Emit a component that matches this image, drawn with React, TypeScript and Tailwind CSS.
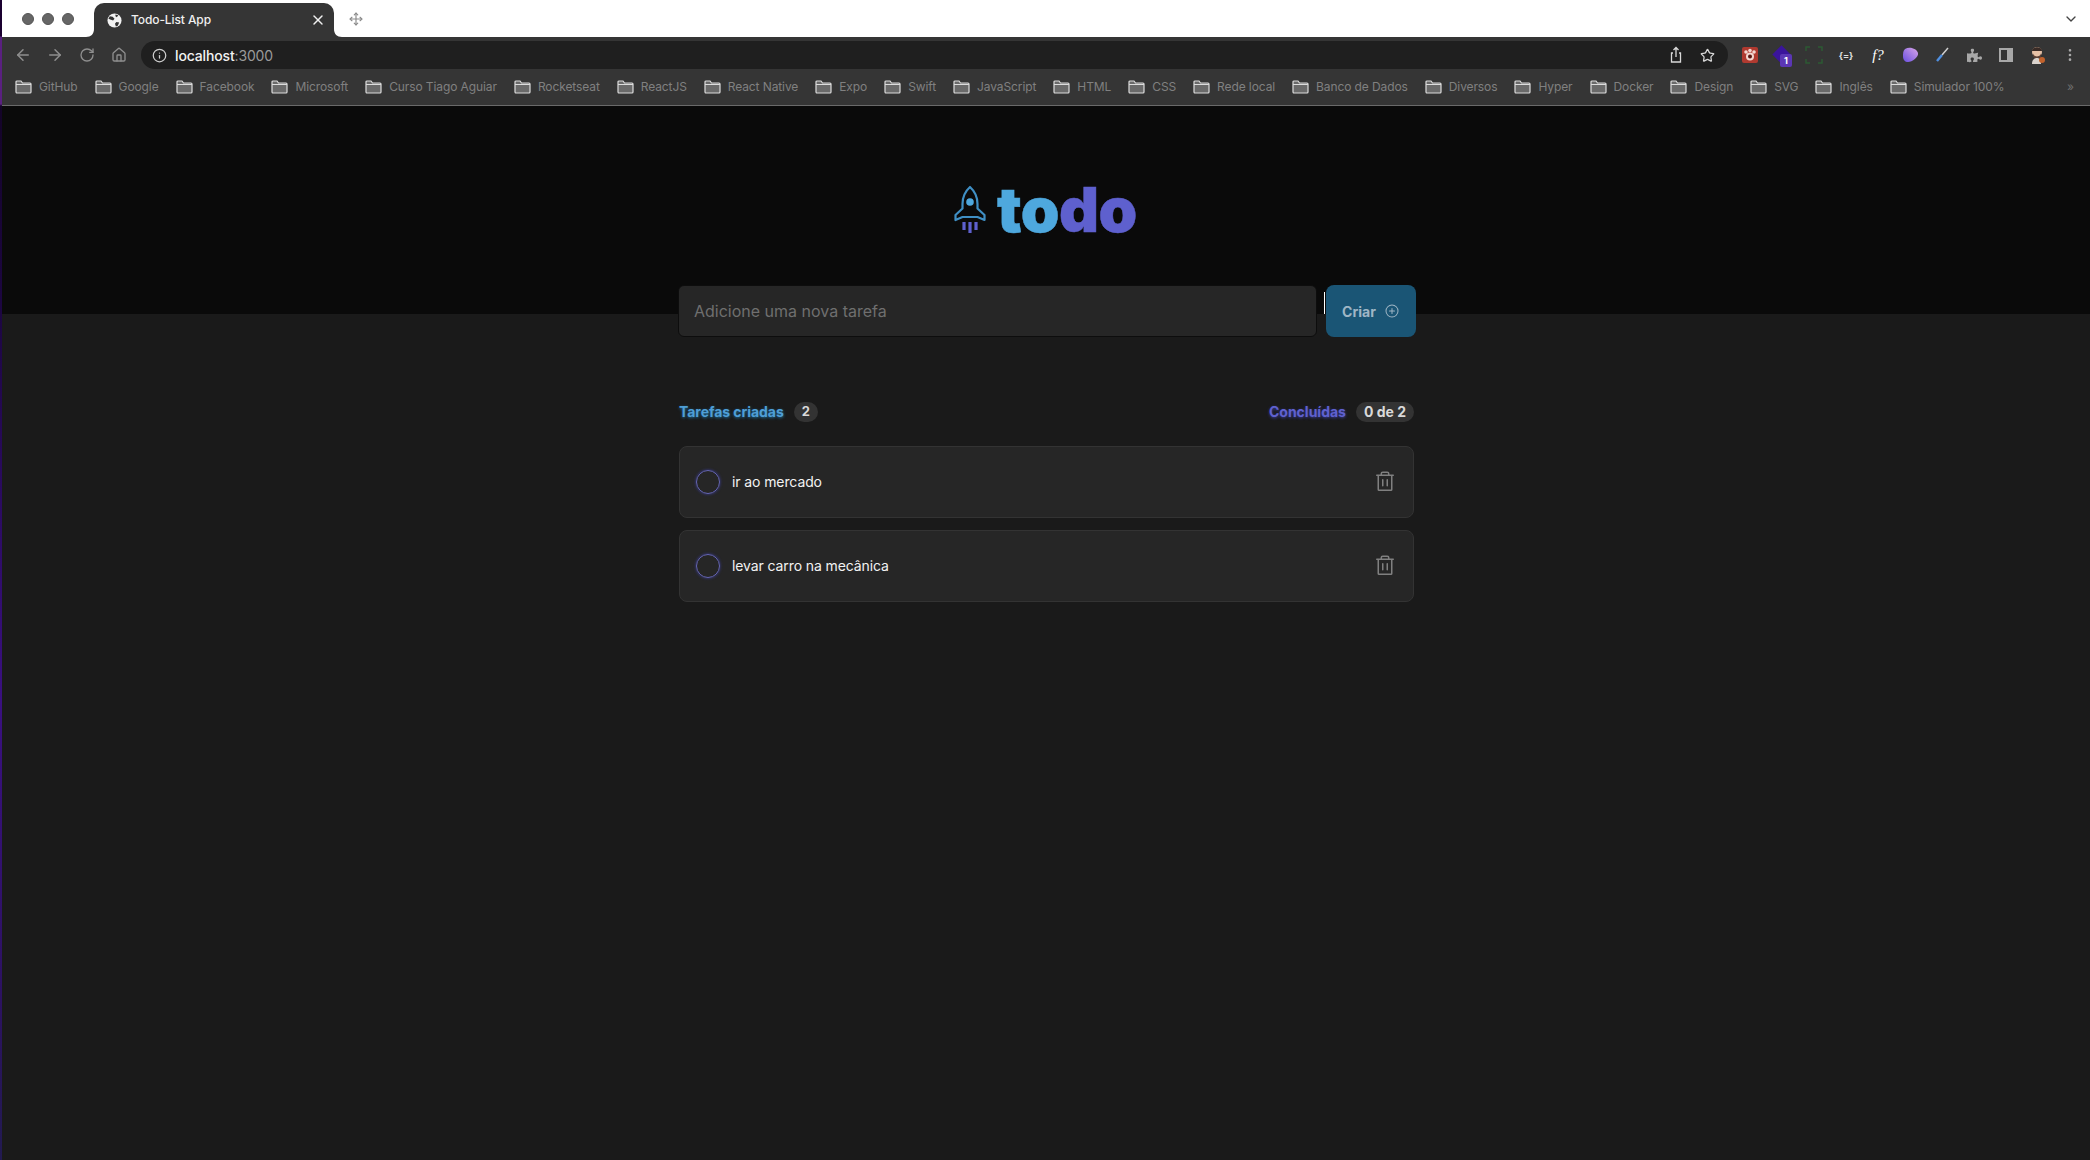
import { ArrowLeft, ArrowRight, ChevronDown, Home, Info, MoreVertical, RotateCw, Star, X, Move } from 'lucide-react';
import { FaPuzzlePiece } from 'react-icons/fa';
import { PiPlusCircle, PiTrash } from 'react-icons/pi';

const bookmarks = [
  'GitHub', 'Google', 'Facebook', 'Microsoft', 'Curso Tiago Aguiar', 'Rocketseat', 'ReactJS', 'React Native',
  'Expo', 'Swift', 'JavaScript', 'HTML', 'CSS', 'Rede local', 'Banco de Dados', 'Diversos', 'Hyper', 'Docker',
  'Design', 'SVG', 'Inglês', 'Simulador 100%',
];

const tasks = ['ir ao mercado', 'levar carro na mecânica'];

const FolderIcon = () => (
  <svg width="17" height="14" viewBox="0 0 17 14" className="shrink-0">
    <path d="M1 3V2a1 1 0 0 1 1-1h4l1.5 2H15a1 1 0 0 1 1 1v8a1 1 0 0 1-1 1H2a1 1 0 0 1-1-1V3z" fill="#6a6a6a" stroke="#dcdcdc" strokeWidth="1.2" />
    <path d="M1 4.500h15" stroke="#dcdcdc" strokeWidth="1" />
  </svg>
);

const Globe = () => (
  <svg width="15" height="15" viewBox="0 0 16 16" className="shrink-0">
    <circle cx="8" cy="8" r="7.500" fill="#f2f2f2" />
    <path d="M3 3.500l3 .5 2 2-1.500 2L3.500 7 1.500 6zM10 9.500l3 .5-1.500 3.500-2 1-1-3zM9 1.500l3 1-1.500 2L9 3.500z" fill="#333333" />
  </svg>
);

const Rocket = () => (
  <svg width="34" height="50" viewBox="0 0 34 50" className="shrink-0" fill="none">
    <path d="M17 2c5 4.500 7.500 11 7.500 17v4.500l7 6.500v5l-7-3h-15l-7 3v-5l7-6.500V19C9.500 13 12 6.500 17 2z" stroke="#3f8fc4" strokeWidth="2.200" strokeLinejoin="round" />
    <circle cx="17" cy="17" r="3.800" fill="#4ea8de" />
    <path d="M11 37v8M17 37v11M23 37v8" stroke="#5e60ce" strokeWidth="3.200" />
  </svg>
);

const ExtCell = ({ children }: { children: React.ReactNode }) => (
  <div className="relative w-[32px] h-[28px] flex items-center justify-center">{children}</div>
);

const Extensions = () => (
  <div className="flex items-center ml-[6px]">
    <ExtCell>
      <svg width="18" height="18" viewBox="0 0 18 18">
        <rect x="1" y="1" width="16" height="16" rx="2" fill="#b03a30" />
        <circle cx="5" cy="6" r="1.800" fill="#f3d6d0" />
        <circle cx="9" cy="4.500" r="1.800" fill="#f3d6d0" />
        <circle cx="13" cy="6" r="1.800" fill="#f3d6d0" />
        <circle cx="9" cy="10.500" r="4" fill="#f3d6d0" />
        <circle cx="9" cy="10.500" r="2" fill="#5a1712" />
      </svg>
    </ExtCell>
    <ExtCell>
      <div className="w-[13px] h-[13px] rotate-45 bg-[#3a149c] -translate-x-[1px] -translate-y-[1px]" />
      <span className="absolute left-[14px] top-[13px] w-[12px] h-[13px] rounded-[2px] bg-[#5b36b5] text-white text-[9px] font-bold leading-[13px] text-center">1</span>
    </ExtCell>
    <ExtCell>
      <svg width="18" height="18" viewBox="0 0 18 18" fill="none" stroke="#2c5a33" strokeWidth="1.500">
        <path d="M1 5V1h4M13 1h4v4M17 13v4h-4M5 17H1v-4" />
      </svg>
    </ExtCell>
    <ExtCell>
      <span className="text-[9px] font-bold text-[#e2e2e2] leading-none">{'{=}'}</span>
    </ExtCell>
    <ExtCell>
      <span className="text-[15px] italic text-white leading-none font-['Liberation_Serif',serif]">f?</span>
    </ExtCell>
    <ExtCell>
      <svg width="18" height="18" viewBox="0 0 18 18">
        <defs>
          <linearGradient id="blob" x1="1" y1="0" x2="0" y2="1">
            <stop offset="0" stopColor="#d9a6e8" />
            <stop offset="1" stopColor="#6a4fe0" />
          </linearGradient>
        </defs>
        <path d="M4 3c5-3 12 0 13 4 1 4-6 9-10 9-3 0-5-2-5-6 0-3 0-5 2-7z" fill="url(#blob)" />
      </svg>
    </ExtCell>
    <ExtCell>
      <svg width="18" height="18" viewBox="0 0 18 18" fill="none">
        <path d="M15 2L9 9" stroke="#d0d0d0" strokeWidth="1.500" />
        <path d="M9 9l-5 6" stroke="#4f8fe0" strokeWidth="2.400" />
      </svg>
    </ExtCell>
    <ExtCell>
      <FaPuzzlePiece size={15} color="#a8a8a8" />
    </ExtCell>
    <ExtCell>
      <div className="w-[14px] h-[14px] border-2 border-[#a8a8a8] border-r-[6px]" />
    </ExtCell>
    <ExtCell>
      <svg width="20" height="20" viewBox="0 0 20 20">
        <circle cx="9" cy="7" r="5" fill="#e6c1a6" />
        <path d="M4 6c0-5 10-5 10 0z" fill="#3a2b26" />
        <path d="M5 8.500c1 4 7 4 8 0v3c-1 2-7 2-8 0z" fill="#5c4034" />
        <path d="M4 19c0-5 3-6 5-6s4 1 4 6z" fill="#d9d2cc" />
        <circle cx="14" cy="15" r="3" fill="#c2622c" />
      </svg>
    </ExtCell>
    <ExtCell>
      <MoreVertical size={16} color="#a8a8a8" />
    </ExtCell>
  </div>
);

const BrowserChrome = () => (
  <div className="shrink-0">
    {/* Tab strip */}
    <div className="h-[37px] bg-white flex items-end">
      <div className="flex items-center gap-[8px] w-[92px] h-full pl-[20px]">
        <span className="w-[12px] h-[12px] rounded-full bg-[#666666] border border-[#555555] shrink-0" />
        <span className="w-[12px] h-[12px] rounded-full bg-[#666666] border border-[#555555] shrink-0" />
        <span className="w-[12px] h-[12px] rounded-full bg-[#666666] border border-[#555555] shrink-0" />
      </div>
      <div className="relative w-[240px] h-[34px] bg-[#353535] rounded-t-[10px] flex items-center pl-[13px] pr-[8px] gap-[9px]">
        <Globe />
        <span className="text-[12px] font-medium tracking-[-0.1px] text-[#f0f0f0] flex-1">Todo-List App</span>
        <X size={16} color="#f0f0f0" strokeWidth={2.200} />
        <svg width="8" height="8" viewBox="0 0 8 8" className="absolute left-[-8px] bottom-0">
          <path d="M8 0v8H0c5 0 8-3 8-8z" fill="#353535" />
        </svg>
        <svg width="8" height="8" viewBox="0 0 8 8" className="absolute right-[-8px] bottom-0">
          <path d="M0 0v8h8C3 8 0 5 0 0z" fill="#353535" />
        </svg>
      </div>
      <div className="h-full flex items-center ml-[15px]">
        <Move size={14} color="#8a8a8a" />
      </div>
      <div className="h-full flex items-center ml-auto mr-[11px]">
        <ChevronDown size={16} color="#444444" />
      </div>
    </div>

    {/* Toolbar */}
    <div className="h-[33px] bg-[#353535] flex items-start pt-[4px] pl-[5px]">
      <div className="h-[28px] flex items-center text-[#8f8f8f]">
        <div className="w-[32px] flex justify-center"><ArrowLeft size={18} /></div>
        <div className="w-[32px] flex justify-center"><ArrowRight size={18} /></div>
        <div className="w-[32px] flex justify-center"><RotateCw size={16} /></div>
        <div className="w-[32px] flex justify-center"><Home size={16} /></div>
      </div>
      <div className="ml-[6px] w-[1587px] h-[28px] rounded-full bg-[#1f1f1f] flex items-center pl-[11px] pr-[13px] gap-[8px]">
        <Info size={15} color="#cfcfcf" />
        <span className="text-[14px] tracking-[-0.15px] text-[#f2f2f2] font-medium">
          localhost<span className="text-[#9a9a9a] font-normal">:3000</span>
        </span>
        <div className="ml-auto flex items-center gap-[16px]">
          <svg width="16" height="18" viewBox="0 0 16 18" fill="none" stroke="#d9d9d9" strokeWidth="1.300">
            <path d="M5 7H3.500v9h9V7H11M8 11V1.500M5.500 4L8 1.500 10.500 4" />
          </svg>
          <Star size={15} color="#d9d9d9" />
        </div>
      </div>
      <Extensions />
    </div>

    {/* Bookmarks */}
    <div className="h-[36px] bg-[#353535] border-b border-[#6a6a6a] flex items-center pl-[13px] pr-[16px] pb-[1px] gap-[17px]">
      {bookmarks.map((b) => (
        <div key={b} className="flex items-center gap-[7px] shrink-0">
          <FolderIcon />
          <span className="text-[12px] tracking-[-0.1px] text-[#808080] whitespace-nowrap">{b}</span>
        </div>
      ))}
      <span className="ml-auto text-[12px] text-[#6e6e6e]">»</span>
    </div>
  </div>
);

export default function App() {
  return (
    <div className="h-screen flex overflow-hidden bg-[#1a1a1a] font-['Inter',sans-serif]">
      {/* sliver of desktop wallpaper at the window edge */}
      <div className="w-[2px] shrink-0 bg-[linear-gradient(to_bottom,#1a0030_0,#1a0030_36px,#5a2080_37px,#5a2080_104px,#140428_106px,#1c0640_300px,#3a1080_700px,#2c1260_1000px,#221a50_1160px)]" />
      <div className="flex-1 min-w-0 flex flex-col">
        <BrowserChrome />

        {/* Header */}
        <header className="h-[208px] shrink-0 bg-[#0a0a0a] flex items-start pl-[951px] pt-[79px] gap-[10px]">
          <Rocket />
          <h1 className="text-[62px] leading-[50px] font-black tracking-[-0.5px] whitespace-nowrap [-webkit-text-stroke:0.5px_currentColor]">
            <span className="text-[#4ea8de]">to</span>
            <span className="text-[#5e60ce]">do</span>
          </h1>
        </header>

        <main className="w-[738px] ml-[676px] -mt-[29px] relative">
          {/* New task form */}
          <form className="flex gap-[9px]">
            <div className="flex-1 h-[52px] rounded-[6px] bg-[#262626] border border-[#0d0d0d] flex items-center px-[15px] text-[16px] text-[#6f6f6f]">
              Adicione uma nova tarefa
            </div>
            <button type="button" className="relative w-[90px] h-[52px] rounded-[8px] bg-[#1a5575] flex items-center justify-center gap-[8px] text-[14px] font-bold text-[#9fb6c5]">
              Criar
              <PiPlusCircle size={16} />
              <span className="absolute left-[-2px] top-[7px] w-px h-[22px] bg-white" />
            </button>
          </form>

          {/* Counters */}
          <div className="mt-[64px] flex items-center justify-between pr-[2px] pl-[1px]">
            <div className="flex items-center gap-[10px]">
              <span className="text-[14px] font-bold tracking-[-0.05px] text-[#4f9ed6] [text-shadow:0_1px_3px_#1e6f9f]">Tarefas criadas</span>
              <span className="h-[20px] px-[8px] rounded-full bg-[#333333] text-[13px] font-bold text-[#d9d9d9] flex items-center">2</span>
            </div>
            <div className="flex items-center gap-[10px]">
              <span className="text-[14px] font-bold text-[#5f61cf] [text-shadow:0_1px_3px_#3b3d9e]">Concluídas</span>
              <span className="h-[20px] px-[8px] rounded-full bg-[#333333] text-[14px] font-bold text-[#d9d9d9] flex items-center">0 de 2</span>
            </div>
          </div>

          {/* Task list */}
          <ul className="mt-[24px] flex flex-col gap-[12px] pr-[2px] pl-[1px]">
            {tasks.map((t) => (
              <li key={t} className="h-[72px] rounded-[8px] bg-[#262626] border border-[#333333] flex items-center pl-[16px] pr-[16px]">
                <span className="w-[24px] h-[24px] rounded-full border-[1.5px] border-[#6565b5] shadow-[0_0_3px_#3b3d9e] shrink-0" />
                <span className="ml-[12px] pb-[2px] text-[14px] tracking-[-0.1px] text-[#f2f2f2] flex-1">{t}</span>
                <PiTrash size={24} color="#808080" />
              </li>
            ))}
          </ul>
        </main>
      </div>
    </div>
  );
}
